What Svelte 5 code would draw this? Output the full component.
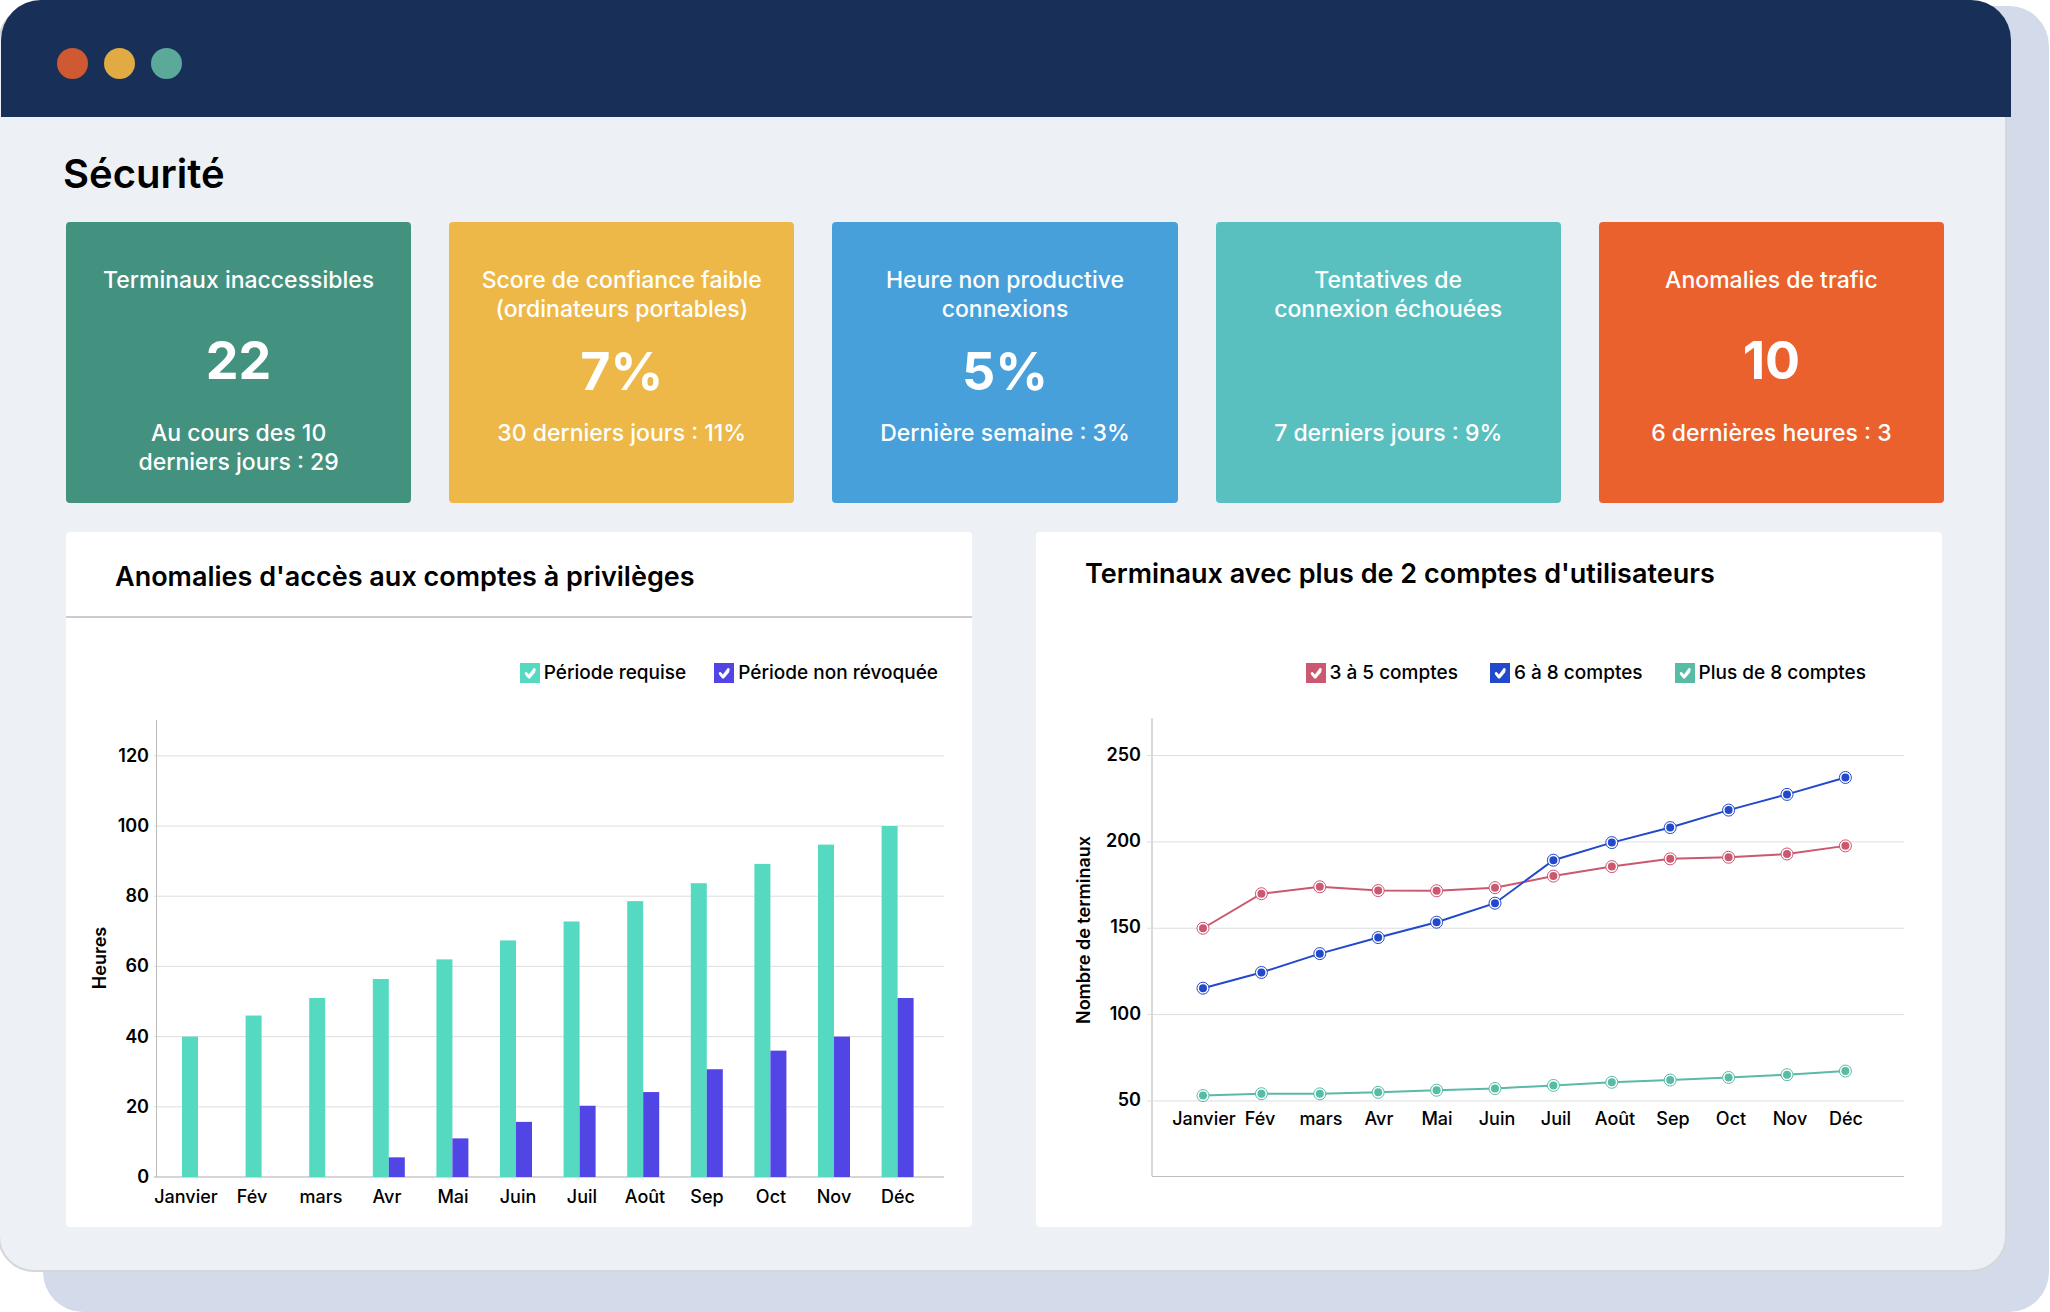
<script>
  const cards = [
    { tone: 'green', title: ['Terminaux inaccessibles'], value: '22', note: ['Au cours des 10', 'derniers jours : 29'] },
    { tone: 'yellow', title: ['Score de confiance faible', '(ordinateurs portables)'], value: '7%', note: ['30 derniers jours : 11%'] },
    { tone: 'blue', title: ['Heure non productive', 'connexions'], value: '5%', note: ['Dernière semaine : 3%'] },
    { tone: 'teal', title: ['Tentatives de', 'connexion échouées'], value: '', note: ['7 derniers jours : 9%'] },
    { tone: 'orange', title: ['Anomalies de trafic'], value: '10', note: ['6 dernières heures : 3'] }
  ];

  const months = ['Janvier', 'Fév', 'mars', 'Avr', 'Mai', 'Juin', 'Juil', 'Août', 'Sep', 'Oct', 'Nov', 'Déc'];

  let bars = $state([
    { id: 'required', name: 'Période requise', shown: true, offset: 0, values: [40, 46, 51, 56.4, 62, 67.4, 72.8, 78.6, 83.7, 89.2, 94.7, 100] },
    { id: 'unrevoked', name: 'Période non révoquée', shown: true, offset: 16, values: [0, 0, 0, 5.6, 11, 15.7, 20.3, 24.2, 30.7, 36, 40, 51] }
  ]);
  const barTicks = [120, 100, 80, 60, 40, 20, 0];
  const barLabelX = [120, 186, 255, 321, 387, 452, 516, 579, 641, 705, 768, 832];
  const barX = (i) => 116 + i * 63.6;
  const barY = (v) => 477 - v * 3.51;

  let lines = $state([
    { id: 'low', name: '3 à 5 comptes', shown: true, values: [150, 170, 174, 171.8, 171.7, 173.5, 180.2, 185.7, 190.2, 191.1, 193, 197.7] },
    { id: 'mid', name: '6 à 8 comptes', shown: true, values: [115.3, 124.4, 135.3, 144.6, 153.5, 164.5, 189.4, 199.6, 208.3, 218.4, 227.5, 237.3] },
    { id: 'high', name: 'Plus de 8 comptes', shown: true, values: [53.1, 54.2, 54.1, 55, 56.2, 57.2, 59, 60.8, 62.1, 63.6, 65.2, 67.3] }
  ]);
  const lineTicks = [250, 200, 150, 100, 50];
  const lineLabelX = [168, 224, 285, 343, 401, 461, 520, 579, 637, 695, 754, 810];
  const lineX = (i) => 167 + i * 58.4;
  const lineY = (v) => 487.3 - v * 1.727;
</script>

{#snippet legend(series)}
  <div class="legend">
    {#each series as s (s.id)}
      <label class="entry {s.id}">
        <span class="tick">
          <input type="checkbox" bind:checked={s.shown} />
          <svg viewBox="0 0 20 20" aria-hidden="true"><path d="M4.8 9.6 6.6 9 8.9 11.6 14 4.8 15.8 6 15 9.4 9.9 15.6 8.3 15.6 5 11.6Z" /></svg>
        </span>
        <span>{s.name}</span>
      </label>
    {/each}
  </div>
{/snippet}

<div class="stage">
  <div class="window">
    <header class="titlebar">
      <span class="dot red"></span>
      <span class="dot amber"></span>
      <span class="dot mint"></span>
    </header>

    <main>
      <h1>Sécurité</h1>

      <section class="cards">
        {#each cards as card}
          <article class="card {card.tone}">
            <h2>{#each card.title as line}<span>{line}</span>{/each}</h2>
            <strong>{card.value}</strong>
            <p>{#each card.note as line}<span>{line}</span>{/each}</p>
          </article>
        {/each}
      </section>

      <section class="panels">
        <article class="panel ruled">
          <h2>Anomalies d'accès aux comptes à privilèges</h2>
          {@render legend(bars)}
          <svg class="chart" viewBox="0 0 906 527" role="img" aria-label="Heures par mois">
            {#each barTicks as t}
              <line class:base={t === 0} class="grid" x1="88" x2="878" y1={barY(t)} y2={barY(t)} />
              <text class="value" x="83" y={barY(t) + 6}>{t}</text>
            {/each}
            <line class="axis" x1="90.5" x2="90.5" y1="20" y2="477" />
            {#each bars as s (s.id)}
              {#if s.shown}
                <g class="bar {s.id}">
                  {#each s.values as v, i}
                    <rect x={barX(i) + s.offset} y={barY(v)} width="16" height={v * 3.51} />
                  {/each}
                </g>
              {/if}
            {/each}
            {#each months as m, i}
              <text class="month" x={barLabelX[i]} y="503">{m}</text>
            {/each}
            <text class="caption" x="-258" y="40" transform="rotate(-90)">Heures</text>
          </svg>
        </article>

        <article class="panel plain">
          <h2>Terminaux avec plus de 2 comptes d'utilisateurs</h2>
          {@render legend(lines)}
          <svg class="chart" viewBox="0 0 906 527" role="img" aria-label="Nombre de terminaux par mois">
            {#each lineTicks as t}
              <line class="grid" x1="111" x2="868" y1={lineY(t)} y2={lineY(t)} />
              <text class="value" x="105" y={lineY(t) + 5}>{t}</text>
            {/each}
            <line class="axis soft" x1="116" x2="116" y1="18" y2="476" />
            <line class="axis" x1="116" x2="868" y1="476.5" y2="476.5" />
            {#each lines as s (s.id)}
              {#if s.shown}
                <g class="trend {s.id}">
                  <polyline points={s.values.map((v, i) => `${lineX(i)},${lineY(v)}`).join(' ')} />
                  {#each s.values as v, i}
                    <circle class="ring" cx={lineX(i)} cy={lineY(v)} r="6" />
                    <circle class="core" cx={lineX(i)} cy={lineY(v)} r="4" />
                  {/each}
                </g>
              {/if}
            {/each}
            {#each months as m, i}
              <text class="month" x={lineLabelX[i]} y="425">{m}</text>
            {/each}
            <text class="caption" x="-230" y="54" transform="rotate(-90)">Nombre de terminaux</text>
          </svg>
        </article>
      </section>
    </main>
  </div>
</div>

<style>
  :global(body) {
    margin: 0;
    background: #fff;
    overflow-x: hidden;
  }
  .stage {
    position: relative;
    padding: 6px 43px 40px 0;
    font-family: Inter, 'Liberation Sans', sans-serif;
    color: #000;
  }
  .stage::before {
    content: '';
    position: absolute;
    inset: 6px 1px 0 43px;
    border-radius: 40px;
    background: #d3daea;
  }
  .window {
    position: relative;
    margin-left: -2px;
    border: 2px solid #d4d8da;
    border-radius: 36px;
    background: #edf0f5;
  }
  .titlebar {
    display: flex;
    align-items: center;
    gap: 16px;
    height: 117px;
    margin: -8px -6px 0 1px;
    padding: 9px 56px 0;
    box-sizing: border-box;
    border-radius: 40px 40px 0 0;
    background: #182f57;
  }
  .dot {
    width: 31px;
    height: 31px;
    border-radius: 50%;
  }
  .dot.red { background: #cf5932; }
  .dot.amber { background: #e1aa42; }
  .dot.mint { background: #5aa999; }

  main {
    padding: 33px 63px 43px 66px;
  }
  h1, h2, p {
    margin: 0;
  }
  h1 {
    margin: 0 0 24px -3px;
    font-size: 40px;
    line-height: 48px;
    font-weight: 600;
  }
  .cards {
    display: grid;
    grid-template-columns: repeat(5, minmax(0, 1fr));
    gap: 38px;
    margin-right: -2px;
  }
  .card {
    display: flex;
    flex-direction: column;
    min-height: 281px;
    padding: 44px 12px 26px;
    box-sizing: border-box;
    border-radius: 4px;
    color: #fff;
    text-align: center;
  }
  .card h2, .card p {
    font-size: 23px;
    line-height: 29px;
    font-weight: 500;
  }
  .card h2 { min-height: 36px; }
  .card p { min-height: 58px; }
  .card span { display: block; }
  .card strong {
    display: flex;
    flex: 1;
    align-items: center;
    justify-content: center;
    font-size: 52px;
    line-height: 60px;
    font-weight: 700;
  }
  .card.green { background: #43917f; }
  .card.yellow { background: #eeb849; }
  .card.blue { background: #47a0da; }
  .card.teal { background: #59c0bf; }
  .card.orange { background: #eb612d; }

  .panels {
    display: grid;
    grid-template-columns: repeat(2, minmax(0, 1fr));
    gap: 64px;
    margin-top: 29px;
  }
  .panel {
    border-radius: 4px;
    background: #fff;
  }
  .panel h2 {
    padding: 29px 49px 23px;
    border-bottom: 2px solid #cdcad3;
    font-size: 27px;
    line-height: 32px;
    font-weight: 600;
  }
  .panel.plain h2 {
    padding-top: 26px;
    padding-bottom: 26px;
    border-color: transparent;
  }
  .legend {
    display: flex;
    justify-content: flex-end;
    gap: 28px;
    padding: 43px 34px 15px;
  }
  .plain .legend {
    gap: 32px;
    padding-right: 76px;
  }
  .entry {
    display: flex;
    align-items: center;
    gap: 4px;
    font-size: 19px;
    line-height: 24px;
    font-weight: 500;
  }
  .tick {
    display: grid;
    width: 20px;
    height: 20px;
  }
  .tick input, .tick svg {
    grid-area: 1 / 1;
    width: 20px;
    height: 20px;
    margin: 0;
  }
  .tick input {
    appearance: none;
    border: 1px solid currentColor;
    color: inherit;
  }
  .tick input:checked { background: currentColor; }
  .tick svg {
    fill: #fff;
    pointer-events: none;
  }
  .required .tick { color: #56d9c1; }
  .unrevoked .tick { color: #5145e5; }
  .low .tick { color: #cb586f; }
  .mid .tick { color: #2248cb; }
  .high .tick { color: #57bba6; }

  .chart {
    display: block;
    width: 100%;
    height: auto;
  }
  .grid { stroke: #dedede; stroke-width: 1; }
  .grid.base { stroke: #d6d6d6; stroke-width: 2; }
  .axis { stroke: #bcbcbc; stroke-width: 1; }
  .axis.soft { stroke: #d9d9d9; stroke-width: 2; }
  .value {
    font-size: 18px;
    font-weight: 600;
    text-anchor: end;
  }
  .month {
    font-size: 18px;
    font-weight: 500;
    text-anchor: middle;
  }
  .caption {
    font-size: 18px;
    font-weight: 600;
    text-anchor: middle;
  }
  .bar.required { fill: #56d9c1; }
  .bar.unrevoked { fill: #5145e5; }
  .trend { color: #57bba6; }
  .trend.low { color: #cb586f; }
  .trend.mid { color: #2248cb; }
  .trend polyline {
    fill: none;
    stroke: currentColor;
    stroke-width: 2;
  }
  .ring {
    fill: #fff;
    stroke: currentColor;
    stroke-width: 1;
  }
  .core { fill: currentColor; }
</style>
